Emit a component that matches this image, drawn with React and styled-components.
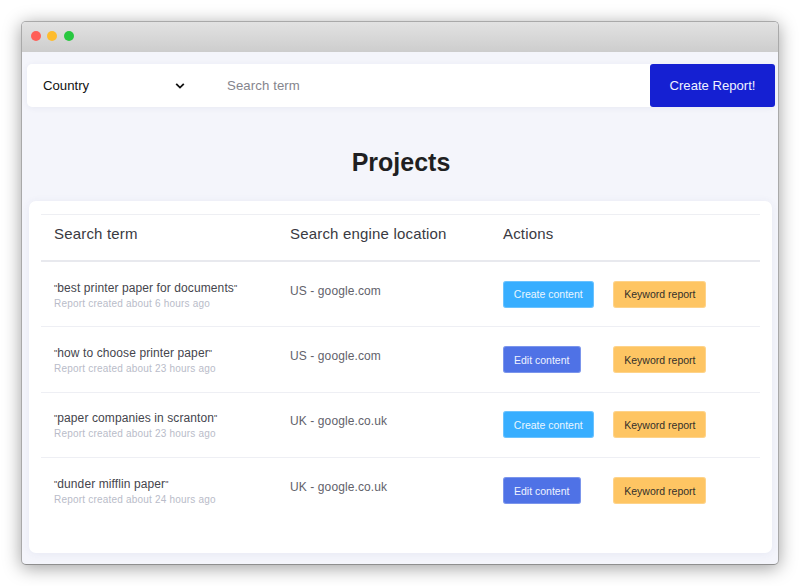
import React from "react";
import styled, { createGlobalStyle } from "styled-components";

const GlobalStyle = createGlobalStyle`
  html, body {
    margin: 0;
    padding: 0;
    background: #fff;
  }
  * {
    box-sizing: border-box;
  }
`;

const reports = [
  { term: "best printer paper for documents", age: "6 hours", location: "US - google.com", hasContent: false },
  { term: "how to choose printer paper", age: "23 hours", location: "US - google.com", hasContent: true },
  { term: "paper companies in scranton", age: "23 hours", location: "UK - google.co.uk", hasContent: false },
  { term: "dunder mifflin paper", age: "24 hours", location: "UK - google.co.uk", hasContent: true },
];

const Page = styled.div`
  width: 800px;
  height: 586px;
  padding: 21px;
  overflow: hidden;
  font-family: "Liberation Sans", Arial, sans-serif;
`;

const Window = styled.div`
  width: 758px;
  height: 544px;
  border-radius: 5px;
  overflow: hidden;
  background: #f4f5fb;
  border: 1px solid #a9a9a9;
  border-bottom-color: #8f8f8f;
  box-shadow: 0 3px 18px rgba(0, 0, 0, 0.38);
  display: flex;
  flex-direction: column;
`;

const TitleBar = styled.div`
  height: 30px;
  flex-shrink: 0;
  padding: 0 0 2px 9px;
  display: flex;
  align-items: center;
  gap: 6.3px;
  background: linear-gradient(#e2e2e2, #cdcdcd);
`;

const Dot = styled.span`
  width: 10px;
  height: 10px;
  border-radius: 50%;
  background: ${props => props.color};
`;

const Content = styled.div`
  flex: 1;
  padding: 12px 3px 11px 5px;
  display: flex;
  flex-direction: column;
`;

const SearchBar = styled.div`
  height: 43px;
  flex-shrink: 0;
  display: flex;
  align-items: center;
  background: #fff;
  border-radius: 5px;
  box-shadow: 0 1px 6px rgba(40, 50, 120, 0.06);
`;

const CountrySelect = styled.div`
  width: 200px;
  padding-left: 16px;
  padding-right: 48px;
  display: flex;
  align-items: center;
  justify-content: space-between;
  font-size: 13.2px;
  color: #111;
`;

const Chevron = styled.svg`
  width: 10px;
  height: 8px;
  margin-right: -6px;
`;

const SearchTerm = styled.div`
  flex: 1;
  font-size: 13.2px;
  color: #85858d;
  letter-spacing: 0.1px;
`;

const ReportButton = styled.div`
  width: 125px;
  height: 43px;
  border-radius: 3px;
  background: #1520d2;
  color: #f0f2ff;
  font-size: 13.1px;
  display: flex;
  align-items: center;
  justify-content: center;
`;

const Title = styled.h1`
  margin: 40px 0 24px;
  height: 30px;
  line-height: 30px;
  text-align: center;
  font-size: 25px;
  font-weight: 700;
  color: #1f1f22;
`;

const Card = styled.div`
  flex: 1;
  margin: 0 3px 0 2px;
  padding: 13px 12px 0;
  background: #fff;
  border-radius: 7px;
  box-shadow: 0 1px 8px rgba(60, 70, 140, 0.07);
`;

const Row = styled.div`
  display: grid;
  grid-template-columns: 236px 213px 1fr;
  padding-left: 13px;
  align-items: center;
`;

const HeadRow = styled(Row)`
  height: 48px;
  padding-bottom: 8px;
  border-top: 1px solid #eeeff3;
  border-bottom: 2px solid #e8e9ee;
  font-size: 15px;
  letter-spacing: 0.18px;
  color: #3a3a42;
`;

const ReportRow = styled(Row)`
  height: 65.4px;
  border-bottom: ${props => (props.last ? "none" : "1px solid #eeeff4")};
`;

const TermBlock = styled.div`
  padding-top: 2.8px;
`;

const Term = styled.div`
  font-size: 12px;
  line-height: 15px;
  letter-spacing: 0.1px;
  color: #45454d;
`;

const Quote = styled.span`
  font-size: 9px;
  vertical-align: 1px;
`;

const Age = styled.div`
  font-size: 10px;
  line-height: 15px;
  letter-spacing: 0.2px;
  color: #b9bcc9;
`;

const Location = styled.div`
  font-size: 12px;
  letter-spacing: 0.1px;
  color: #62626b;
  margin-top: -7px;
`;

const Actions = styled.div`
  display: flex;
  align-items: center;
`;

const ContentSlot = styled.div`
  width: 110.4px;
`;

const ActionButton = styled.div`
  display: inline-flex;
  align-items: center;
  justify-content: center;
  height: 27px;
  width: ${props => props.width}px;
  border-radius: 3px;
  font-size: 10.5px;
  background: ${props => props.bg};
  color: ${props => props.fg};
  box-shadow: 0 0 0 1px rgba(255, 255, 255, 0.25) inset;
`;

const App = () => {
  return (
    <Page>
      <GlobalStyle />
      <Window>
        <TitleBar>
          <Dot color="#ff5f57" />
          <Dot color="#febc2e" />
          <Dot color="#28c840" />
        </TitleBar>
        <Content>
          <SearchBar>
            <CountrySelect>
              Country
              <Chevron viewBox="0 0 10 8">
                <path d="M1.2 1.8 L5 5.6 L8.8 1.8" fill="none" stroke="#111" strokeWidth="1.8" />
              </Chevron>
            </CountrySelect>
            <SearchTerm>Search term</SearchTerm>
            <ReportButton>Create Report!</ReportButton>
          </SearchBar>
          <Title>Projects</Title>
          <Card>
            <HeadRow>
              <div>Search term</div>
              <div>Search engine location</div>
              <div>Actions</div>
            </HeadRow>
            {reports.map((report, i) => (
              <ReportRow key={report.term} last={i === reports.length - 1}>
                <TermBlock>
                  <Term><Quote>"</Quote>{report.term}<Quote>"</Quote></Term>
                  <Age>Report created about {report.age} ago</Age>
                </TermBlock>
                <Location>{report.location}</Location>
                <Actions>
                  <ContentSlot>
                    {report.hasContent ? (
                      <ActionButton width={77.5} bg="#4f72e6" fg="#eef2ff">Edit content</ActionButton>
                    ) : (
                      <ActionButton width={90.5} bg="#38aeff" fg="#eaf6ff">Create content</ActionButton>
                    )}
                  </ContentSlot>
                  <ActionButton width={93} bg="#fec563" fg="#33302a">Keyword report</ActionButton>
                </Actions>
              </ReportRow>
            ))}
          </Card>
        </Content>
      </Window>
    </Page>
  );
};

export default App;
